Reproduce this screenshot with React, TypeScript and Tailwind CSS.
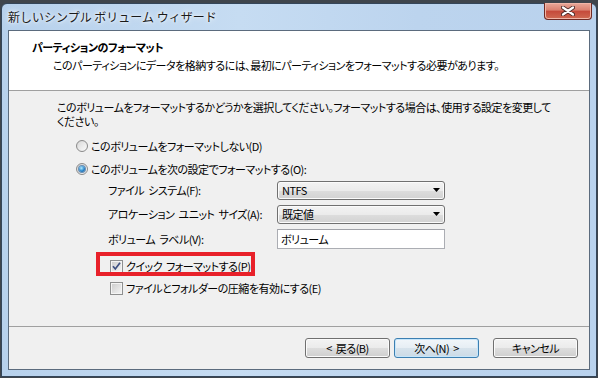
import React from "react";

function Radio({ checked }: { checked?: boolean }) {
  return (
    <span className="relative flex h-[12px] w-[12px] shrink-0 items-center justify-center rounded-full border border-[#8a8a8a] bg-[linear-gradient(135deg,#d4d4d4,#fafafa)]">
      {checked ? (
        <span className="h-[6px] w-[6px] rounded-full bg-[radial-gradient(circle_at_40%_35%,#b4ecff,#2a86cc_55%,#0d4682)] shadow-[0_0_0_1px_#6a8fb4]" />
      ) : (
        <span className="h-[8px] w-[8px] rounded-full bg-[linear-gradient(135deg,#dcdcdc,#f8f8f8)]" />
      )}
    </span>
  );
}

function Check({ checked }: { checked?: boolean }) {
  return (
    <span className="relative flex h-[13px] w-[13px] shrink-0 items-center justify-center border border-[#8e8f8f] bg-[#f4f4f4]">
      <span className="h-[9px] w-[9px] bg-[linear-gradient(135deg,#cfcfcf,#f2f2f2)]" />
      {checked && (
        <svg className="absolute left-0 top-0" width="11" height="11" viewBox="0 0 11 11">
          <path d="M2 5.2 L4.3 8 L9 1.8" stroke="#3d4f80" strokeWidth="1.7" fill="none" />
        </svg>
      )}
    </span>
  );
}

function Combo({ text }: { text: string }) {
  return (
    <div className="flex h-[19px] w-[168px] items-center justify-between rounded-[3px] border border-[#707070] bg-[linear-gradient(#f3f3f3,#ebebeb_50%,#dddddd_51%,#d2d2d2)] pl-[4px] pr-[4px] shadow-[inset_0_0_0_1px_#fbfbfb]">
      <span className="leading-[14px]">{text}</span>
      <svg width="7" height="4" viewBox="0 0 7 4">
        <path d="M0 0 H7 L3.5 4 Z" fill="#000" />
      </svg>
    </div>
  );
}

function Button({ children, primary }: { children: React.ReactNode; primary?: boolean }) {
  return (
    <div
      className={
        primary
          ? "flex h-[20px] w-[85px] items-center justify-center rounded-[3px] border border-[#3c7fb1] bg-[linear-gradient(#f1f6fa,#e6eef4_50%,#d7e3ec_51%,#cbdae6)] shadow-[inset_0_0_0_1px_#c6e6fb] leading-[14px]"
          : "flex h-[20px] w-[85px] items-center justify-center rounded-[3px] border border-[#707070] bg-[linear-gradient(#f3f3f3,#ebebeb_50%,#dddddd_51%,#cfcfcf)] shadow-[inset_0_0_0_1px_#fbfbfb] leading-[14px]"
      }
    >
      {children}
    </div>
  );
}

export default function App() {
  return (
    <div className="h-[378px] w-[598px] overflow-hidden whitespace-nowrap bg-[#3f454c] px-px pb-px pt-[3px] font-['Noto_Sans_CJK_JP','Liberation_Sans',sans-serif] text-[11px] tracking-[-0.5px] text-black [word-spacing:2px] [font-feature-settings:'palt']">
      <div className="flex h-[374px] flex-col rounded-t-[6px] border border-[#34465a] bg-[linear-gradient(90deg,#b7d1ec,#c6dcf2_40%,#bcd4ee_70%,#b9d2ed)]">
        {/* title bar */}
        <div className="flex h-[26px] items-start justify-between pl-[6px] pr-[4px]">
          <div className="pt-[6px] text-[12px] leading-[14px] tracking-normal text-[#1a1a1a] [word-spacing:0px] [font-feature-settings:normal] [text-shadow:0_0_6px_#ffffff,0_0_3px_#ffffff]">
            新しいシンプル ボリューム ウィザード
          </div>
          <div className="-mt-px flex h-[17px] w-[48px] items-center justify-center rounded-b-[4px] border border-t-0 border-[#6f2a24] bg-[linear-gradient(#e9a99a,#d9806f_45%,#c5493a_50%,#cf6a52)] shadow-[inset_0_0_0_1px_#f0b6a8]">
            <svg width="14" height="10" viewBox="0 0 14 10">
              <path d="M2 1.5 L12 8.5 M12 1.5 L2 8.5" stroke="#4a2a28" strokeWidth="4" strokeLinecap="round" />
              <path d="M2 1.5 L12 8.5 M12 1.5 L2 8.5" stroke="#ffffff" strokeWidth="2.2" strokeLinecap="round" />
            </svg>
          </div>
        </div>
        {/* client */}
        <div className="mx-[6px] flex h-[340px] flex-col border border-[#5b6b7d] bg-white">
          {/* header */}
          <div className="h-[60px] shrink-0 border-b border-[#a0a0a0] bg-white pl-[23px] pt-[9px]">
            <div className="font-bold leading-[14px]">パーティションのフォーマット</div>
            <div className="mt-[4px] pl-[21px] leading-[14px]">
              このパーティションにデータを格納するには、最初にパーティションをフォーマットする必要があります。
            </div>
          </div>
          {/* body */}
          <div className="h-[236px] shrink-0 border-b border-[#a0a0a0] bg-[#f0f0f0] pl-[48px] pt-[9px]">
            <div className="leading-[14px]">
              このボリュームをフォーマットするかどうかを選択してください。フォーマットする場合は、使用する設定を変更して
              <br />
              ください。
            </div>
            <div className="ml-[19px] mt-[6px] flex h-[24px] items-center gap-[3px]">
              <Radio />
              <span className="leading-[14px]">このボリュームをフォーマットしない(D)</span>
            </div>
            <div className="ml-[19px] flex h-[22px] items-center gap-[3px]">
              <Radio checked />
              <span className="leading-[14px]">このボリュームを次の設定でフォーマットする(O):</span>
            </div>
            <div className="ml-[51px] flex h-[20px] items-center">
              <span className="w-[169px] leading-[14px]">ファイル システム(F):</span>
              <Combo text="NTFS" />
            </div>
            <div className="ml-[51px] mt-[4px] flex h-[20px] items-center">
              <span className="w-[169px] leading-[14px]">アロケーション ユニット サイズ(A):</span>
              <Combo text="既定値" />
            </div>
            <div className="ml-[51px] mt-[5px] flex h-[20px] items-center">
              <span className="w-[169px] leading-[14px]">ボリューム ラベル(V):</span>
              <div className="flex h-[20px] w-[168px] items-center border border-[#abadb3] border-t-[#a0a2a8] bg-white pl-[3px] leading-[14px]">
                ボリューム
              </div>
            </div>
            <div className="relative ml-[53px] mt-[7px] flex h-[20px] items-center gap-[3px]">
              <Check checked />
              <span className="leading-[14px]">クイック フォーマットする(P)</span>
              <div className="absolute left-[-14px] top-[-4px] h-[24px] w-[159px] border-[4px] border-[#e8212a]" />
            </div>
            <div className="ml-[53px] mt-[2px] flex h-[20px] items-center gap-[3px]">
              <Check />
              <span className="leading-[14px]">ファイルとフォルダーの圧縮を有効にする(E)</span>
            </div>
          </div>
          {/* footer */}
          <div className="flex h-[42px] shrink-0 items-center justify-end bg-[#f0f0f0] pr-[11px]">
            <Button>&lt; 戻る(B)</Button>
            <div className="ml-[4px]">
              <Button primary>次へ(N) &gt;</Button>
            </div>
            <div className="ml-[14px]">
              <Button>キャンセル</Button>
            </div>
          </div>
        </div>
      </div>
    </div>
  );
}
